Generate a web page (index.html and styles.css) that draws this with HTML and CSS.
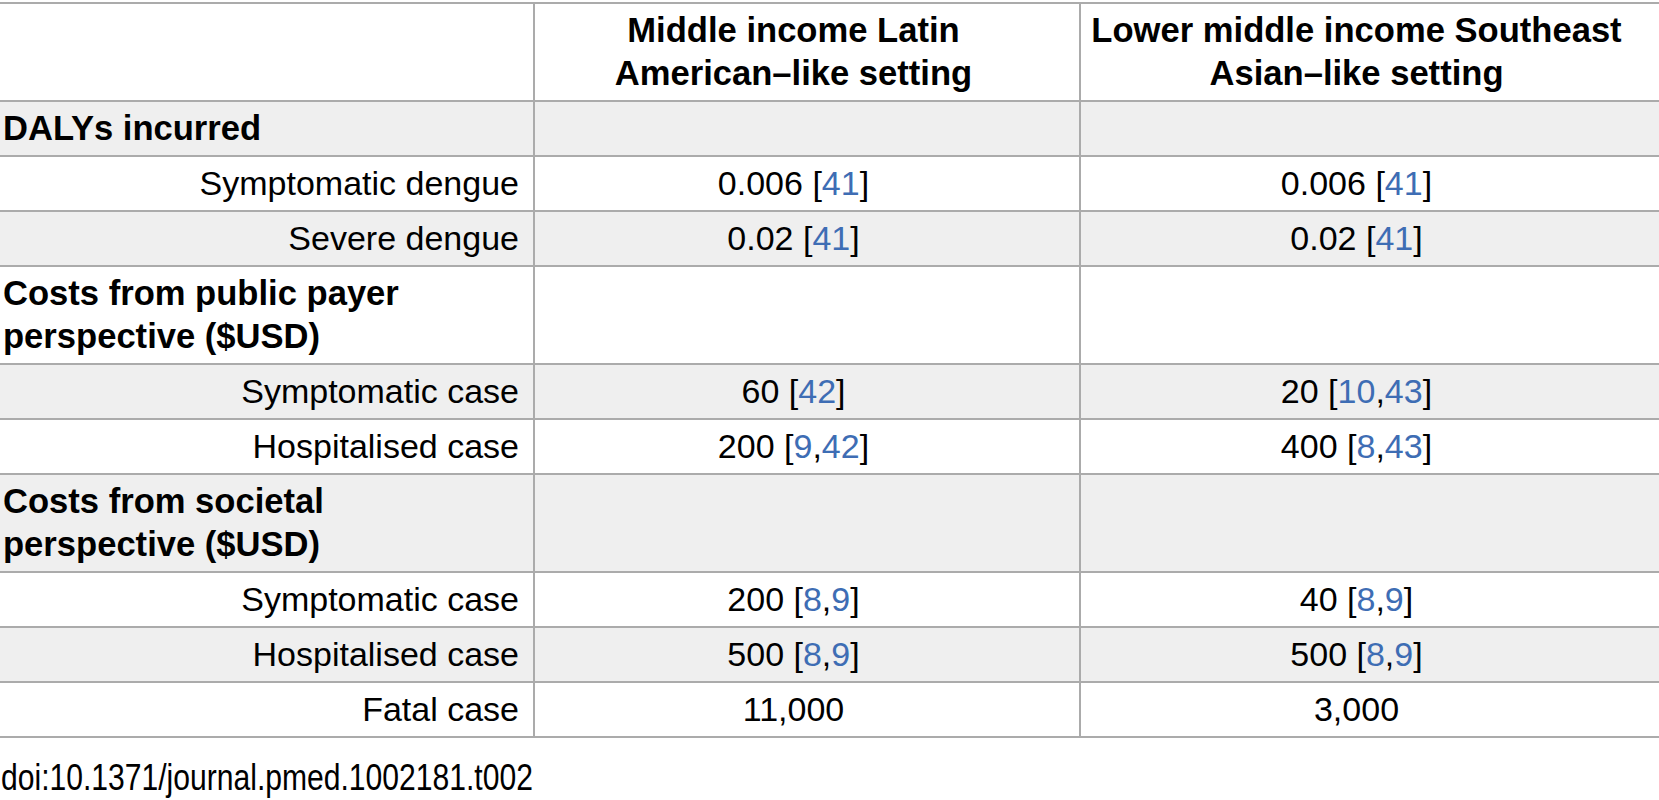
FILE: index.html
```html
<!DOCTYPE html>
<html lang="en">
<head>
<meta charset="utf-8">
<title>Table 2</title>
<link rel="stylesheet" href="styles.css">
</head>
<body>
<div class="wrap">
<table class="data">
  <colgroup>
    <col class="c1">
    <col class="c2">
    <col class="c3">
  </colgroup>
  <thead>
    <tr>
      <th class="lab"></th>
      <th class="val">Middle income Latin<br>American–like setting</th>
      <th class="val">Lower middle income Southeast<br>Asian–like setting</th>
    </tr>
  </thead>
  <tbody>
    <tr class="alt">
      <td class="sec">DALYs incurred</td>
      <td class="val"></td>
      <td class="val"></td>
    </tr>
    <tr>
      <td class="lab">Symptomatic dengue</td>
      <td class="val">0.006 [<a class="ref">41</a>]</td>
      <td class="val">0.006 [<a class="ref">41</a>]</td>
    </tr>
    <tr class="alt">
      <td class="lab">Severe dengue</td>
      <td class="val">0.02 [<a class="ref">41</a>]</td>
      <td class="val">0.02 [<a class="ref">41</a>]</td>
    </tr>
    <tr>
      <td class="sec">Costs from public payer<br>perspective ($USD)</td>
      <td class="val"></td>
      <td class="val"></td>
    </tr>
    <tr class="alt">
      <td class="lab">Symptomatic case</td>
      <td class="val">60 [<a class="ref">42</a>]</td>
      <td class="val">20 [<a class="ref">10</a>,<a class="ref">43</a>]</td>
    </tr>
    <tr>
      <td class="lab">Hospitalised case</td>
      <td class="val">200 [<a class="ref">9</a>,<a class="ref">42</a>]</td>
      <td class="val">400 [<a class="ref">8</a>,<a class="ref">43</a>]</td>
    </tr>
    <tr class="alt">
      <td class="sec">Costs from societal<br>perspective ($USD)</td>
      <td class="val"></td>
      <td class="val"></td>
    </tr>
    <tr>
      <td class="lab">Symptomatic case</td>
      <td class="val">200 [<a class="ref">8</a>,<a class="ref">9</a>]</td>
      <td class="val">40 [<a class="ref">8</a>,<a class="ref">9</a>]</td>
    </tr>
    <tr class="alt">
      <td class="lab">Hospitalised case</td>
      <td class="val">500 [<a class="ref">8</a>,<a class="ref">9</a>]</td>
      <td class="val">500 [<a class="ref">8</a>,<a class="ref">9</a>]</td>
    </tr>
    <tr>
      <td class="lab">Fatal case</td>
      <td class="val">11,000</td>
      <td class="val">3,000</td>
    </tr>
  </tbody>
</table>
<p class="doi"><span class="doi-text">doi:10.1371/journal.pmed.1002181.t002</span></p>
</div>
</body>
</html>
```
FILE: styles.css
```css
html, body {
  margin: 0;
  padding: 0;
  background: #ffffff;
  overflow: hidden;
}

.wrap {
  width: 1659px;
  padding-top: 2px;
  font-family: "Liberation Sans", Arial, Helvetica, sans-serif;
  color: #000000;
}

.data {
  width: 1659px;
  border-collapse: collapse;
  table-layout: fixed;
  font-size: 34px;
  line-height: 43px;
}

.c1 { width: 534px; }
.c2 { width: 546px; }
.c3 { width: 579px; }

.data th,
.data td {
  border-top: 2px solid #ababab;
  border-bottom: 2px solid #ababab;
  padding: 5px 0;
  vertical-align: middle;
}

.data th + th,
.data td + td {
  border-left: 2px solid #ababab;
}

.data th {
  font-weight: bold;
  font-size: 34.6px;
}

.data .val {
  text-align: center;
  padding-right: 27px;
}

.data .lab {
  text-align: right;
  padding-right: 14px;
}

.data .sec {
  text-align: left;
  font-weight: bold;
  font-size: 34.6px;
  padding-left: 3px;
}

.data tr.alt td {
  background: #efefef;
}

.ref {
  color: #3e6db4;
  text-decoration: none;
}

.doi {
  margin: 18px 0 0 0;
  padding-left: 1px;
  font-size: 37px;
  line-height: 44px;
}

.doi-text {
  display: inline-block;
  transform: scaleX(0.813);
  transform-origin: left center;
}
```
